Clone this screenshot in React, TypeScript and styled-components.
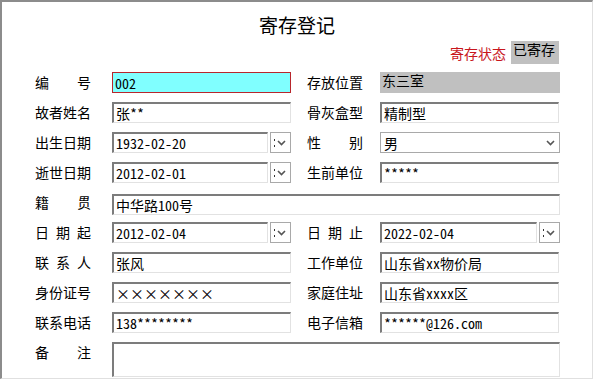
import styled, { createGlobalStyle } from 'styled-components'

const Global = createGlobalStyle`
body {
  margin: 0;
  background: #ffffff;
  font-family: "Noto Sans CJK SC", "Liberation Sans", sans-serif;
}
`

const valueFont = `"Noto Sans Mono CJK SC", "Liberation Mono", "Noto Sans CJK SC", monospace`

const Frame = styled.div`
width: 593px;
height: 379px;
box-sizing: border-box;
border-top: 2px solid #8c8c8c;
border-left: 2px solid #8c8c8c;
border-right: 1px solid #e0e0e0;
border-bottom: 1px solid #e0e0e0;
padding: 0 0 0 33px;
display: flex;
flex-direction: column;
overflow: hidden;
`

const Title = styled.div`
margin-top: 10px;
margin-left: -33px;
height: 26px;
line-height: 26px;
text-align: center;
font-size: 19px;
font-weight: 400;
color: #000;
`

const StatusBar = styled.div`
margin-top: 3px;
display: flex;
justify-content: flex-end;
align-items: flex-start;
padding-right: 33px;
height: 23px;
gap: 5px;
`

const StatusLabel = styled.span`
font-size: 14px;
line-height: 22px;
margin-top: 1px;
color: #c8161d;
`

const GrayBox = styled.div<{ w: number; h: number }>`
width: ${({ w }) => w}px;
height: ${({ h }) => h}px;
box-sizing: border-box;
background: #c0c0c0;
padding-left: 2px;
font-size: 14px;
line-height: 17px;
color: #000;
`

const Form = styled.div`
margin-top: 8px;
display: grid;
grid-template-columns: 77px 195px 73px 180px;
grid-auto-rows: 21px;
row-gap: 9px;
`

const Label = styled.div`
width: 56px;
font-size: 14px;
line-height: 21px;
color: #000;
text-align: justify;
text-align-last: justify;
white-space: nowrap;
`

const Field = styled.input<{ wide?: boolean }>`
box-sizing: border-box;
width: ${({ wide }) => (wide ? '448px' : '179px')};
height: 21px;
margin: 0;
padding: 0 0 0 2px;
border-top: 2px solid #7c7c7c;
border-left: 2px solid #7c7c7c;
border-right: 1px solid #e2e2e2;
border-bottom: 1px solid #e2e2e2;
background: #fff;
font-family: ${valueFont};
font-size: 14px;
color: #000;
outline: none;
`

const CodeField = styled(Field)`
border: 1px solid #b8262c;
background: #80ffff;
padding-left: 2px;
`

const Wide = styled.div`
grid-column: 2 / 5;
`

const DateWrap = styled.div<{ right?: boolean }>`
display: flex;
gap: 2px;
width: ${({ right }) => (right ? '180px' : '179px')};
`

const DateInput = styled(Field)`
flex: 1;
width: auto;
min-width: 0;
`

const DropBtn = styled.div`
width: 21px;
height: 21px;
box-sizing: border-box;
border: 1px solid #a9a9a9;
background: #fff;
display: flex;
align-items: center;
padding-left: 3px;
gap: 2px;
`

const Dots = styled.span`
display: flex;
flex-direction: column;
gap: 4px;
& > i {
  width: 1px;
  height: 2px;
  background: #333;
}
`

const Select = styled.div`
box-sizing: border-box;
width: 180px;
height: 21px;
border: 1px solid #a9a9a9;
display: flex;
align-items: center;
justify-content: space-between;
padding: 0 4px 0 3px;
font-size: 14px;
color: #000;
`

const Memo = styled.textarea`
grid-column: 2 / 5;
box-sizing: border-box;
width: 448px;
height: 35px;
margin: 0;
padding: 0;
resize: none;
border-top: 2px solid #7c7c7c;
border-left: 2px solid #7c7c7c;
border-right: 1px solid #e2e2e2;
border-bottom: 1px solid #e2e2e2;
outline: none;
`

const Chevron = () => (
  <svg width="9" height="6" viewBox="0 0 9 6">
    <path d="M1 1 L4.5 4.5 L8 1" fill="none" stroke="#555" strokeWidth="1.6" />
  </svg>
)

const DatePick: React.FC<{ value: string; right?: boolean }> = ({ value, right }) => (
  <DateWrap right={right}>
    <DateInput readOnly value={value} />
    <DropBtn>
      <Dots>
        <i />
        <i />
      </Dots>
      <Chevron />
    </DropBtn>
  </DateWrap>
)

const App = () => {
  return (
    <Frame>
      <Global />
      <Title>寄存登记</Title>
      <StatusBar>
        <StatusLabel>寄存状态</StatusLabel>
        <GrayBox w={48} h={23}>已寄存</GrayBox>
      </StatusBar>
      <Form>
        <Label>编号</Label>
        <CodeField readOnly value="002" />
        <Label>存放位置</Label>
        <GrayBox w={180} h={21}>东三室</GrayBox>

        <Label>故者姓名</Label>
        <Field readOnly value="张**" />
        <Label>骨灰盒型</Label>
        <Field readOnly value="精制型" />

        <Label>出生日期</Label>
        <DatePick value="1932-02-20" />
        <Label>性别</Label>
        <Select>
          <span>男</span>
          <Chevron />
        </Select>

        <Label>逝世日期</Label>
        <DatePick value="2012-02-01" />
        <Label>生前单位</Label>
        <Field readOnly value="*****" />

        <Label>籍贯</Label>
        <Wide>
          <Field wide readOnly value="中华路100号" />
        </Wide>

        <Label>日期起</Label>
        <DatePick value="2012-02-04" />
        <Label>日期止</Label>
        <DatePick right value="2022-02-04" />

        <Label>联系人</Label>
        <Field readOnly value="张风" />
        <Label>工作单位</Label>
        <Field readOnly value="山东省xx物价局" />

        <Label>身份证号</Label>
        <Field readOnly value="×××××××" />
        <Label>家庭住址</Label>
        <Field readOnly value="山东省xxxx区" />

        <Label>联系电话</Label>
        <Field readOnly value="138********" />
        <Label>电子信箱</Label>
        <Field readOnly value="******@126.com" />

        <Label>备注</Label>
        <Memo readOnly />
      </Form>
    </Frame>
  )
}

export default App
